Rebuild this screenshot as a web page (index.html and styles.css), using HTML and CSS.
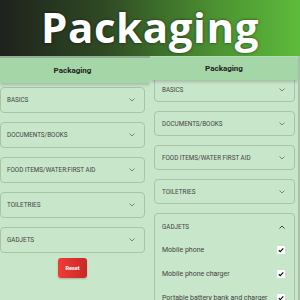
FILE: index.html
```html
<!DOCTYPE html>
<html lang="en">
<head>
  <meta charset="UTF-8">
  <meta name="viewport" content="width=device-width, initial-scale=1.0">
  <title>Packaging</title>
  <link rel="stylesheet" href="styles.css">
</head>
<body>
  <div class="banner">
    <h1 class="banner-title">Packaging</h1>
  </div>

  <div class="shots">
    <div class="phone phone-left">
      <div class="status"></div>
      <div class="appbar">Packaging</div>
      <div class="list">
        <div class="card"><span>BASICS</span><svg class="chev" viewBox="0 0 6 4"><polyline points="0.5,0.5 3,3 5.5,0.5"/></svg></div>
        <div class="card"><span>DOCUMENTS/BOOKS</span><svg class="chev" viewBox="0 0 6 4"><polyline points="0.5,0.5 3,3 5.5,0.5"/></svg></div>
        <div class="card"><span>FOOD ITEMS/WATER:FIRST AID</span><svg class="chev" viewBox="0 0 6 4"><polyline points="0.5,0.5 3,3 5.5,0.5"/></svg></div>
        <div class="card"><span>TOILETRIES</span><svg class="chev" viewBox="0 0 6 4"><polyline points="0.5,0.5 3,3 5.5,0.5"/></svg></div>
        <div class="card"><span>GADJETS</span><svg class="chev" viewBox="0 0 6 4"><polyline points="0.5,0.5 3,3 5.5,0.5"/></svg></div>
      </div>
      <div class="btn-container">
        <button class="reset">Reset</button>
      </div>
    </div>

    <div class="phone phone-right">
      <div class="appbar">Packaging</div>
      <div class="list scrolled">
        <div class="card"><span>BASICS</span><svg class="chev" viewBox="0 0 6 4"><polyline points="0.5,0.5 3,3 5.5,0.5"/></svg></div>
        <div class="card"><span>DOCUMENTS/BOOKS</span><svg class="chev" viewBox="0 0 6 4"><polyline points="0.5,0.5 3,3 5.5,0.5"/></svg></div>
        <div class="card"><span>FOOD ITEMS/WATER FIRST AID</span><svg class="chev" viewBox="0 0 6 4"><polyline points="0.5,0.5 3,3 5.5,0.5"/></svg></div>
        <div class="card"><span>TOILETRIES</span><svg class="chev" viewBox="0 0 6 4"><polyline points="0.5,0.5 3,3 5.5,0.5"/></svg></div>
        <div class="card open">
          <div class="card-head"><span>GADJETS</span><svg class="chev up" viewBox="0 0 6 4"><polyline points="0.5,3.5 3,1 5.5,3.5"/></svg></div>
          <div class="entry"><span>Mobile phone</span><span class="check"><svg viewBox="0 0 8 8"><polyline points="1.8,4.2 3.3,5.6 6.3,2.4"/></svg></span></div>
          <div class="entry"><span>Mobile phone charger</span><span class="check"><svg viewBox="0 0 8 8"><polyline points="1.8,4.2 3.3,5.6 6.3,2.4"/></svg></span></div>
          <div class="entry"><span>Portable battery bank and charger</span><span class="check"><svg viewBox="0 0 8 8"><polyline points="1.8,4.2 3.3,5.6 6.3,2.4"/></svg></span></div>
        </div>
      </div>
    </div>
  </div>
</body>
</html>
```

FILE: styles.css
```css
body {
  margin: 0;
  width: 300px;
  height: 300px;
  overflow: hidden;
  background: #c8e6c9;
  font-family: Roboto, "Liberation Sans", sans-serif;
}
.banner {
  height: 56px;
  background: linear-gradient(90deg, #1e221c 0%, #2f4a24 35%, #4c9232 72%, #5dbb3b 100%);
}
.banner-title {
  margin: 0;
  text-align: center;
  font-family: "Open Sans", sans-serif;
  font-weight: 700;
  font-size: 42px;
  line-height: 54px;
  letter-spacing: 0.6px;
  color: #fff;
  text-shadow: 0 0 3px rgba(0,0,0,0.6);
}
.shots {
  display: flex;
}
.phone {
  width: 150px;
  height: 244px;
  display: flex;
  flex-direction: column;
  overflow: hidden;
}
.phone > * {
  flex-shrink: 0;
}
.status {
  height: 2px;
  background: #93b093;
}
.appbar {
  position: relative;
  z-index: 1;
  height: 25px;
  display: flex;
  align-items: center;
  justify-content: center;
  background: #a5d6a7;
  box-shadow: 0 2px 3px rgba(0,0,0,0.18);
  font-size: 8px;
  font-weight: 700;
  color: #222;
}
.phone-left .appbar {
  width: 150px;
  padding-right: 5px;
  box-sizing: border-box;
}
.phone-right .appbar {
  height: 24px;
  border-top: 1px solid #b6dab7;
  box-sizing: border-box;
}
.list {
  display: flex;
  flex-direction: column;
  gap: 9px;
  padding: 4px 5px 0 0;
}
.list > * {
  flex-shrink: 0;
}
.list.scrolled {
  margin-top: -3px;
  padding: 0 3px 0 4px;
}
.card {
  height: 26px;
  box-sizing: border-box;
  border: 1px solid #a9c3aa;
  border-radius: 4px;
  display: flex;
  align-items: center;
  justify-content: space-between;
  padding: 0 9px 0 6px;
  font-size: 6.3px;
  color: #444;
}
.scrolled .card {
  height: 25px;
  padding: 0 9px 0 7px;
}
.chev {
  width: 6px;
  height: 4px;
  fill: none;
  stroke: #777;
  stroke-width: 0.9;
}
.chev.up {
  stroke: #333;
}
.scrolled .card.open {
  height: auto;
  display: block;
  padding: 0;
}
.card-head {
  height: 24px;
  display: flex;
  align-items: center;
  justify-content: space-between;
  padding: 2px 9px 0 7px;
  box-sizing: border-box;
}
.entry {
  height: 24px;
  display: flex;
  align-items: center;
  justify-content: space-between;
  padding: 0 9px 0 7px;
  font-size: 7px;
  color: #444;
}
.check {
  width: 8px;
  height: 8px;
  background: #fff;
  border-radius: 1px;
  display: flex;
}
.check svg {
  width: 8px;
  height: 8px;
  fill: none;
  stroke: #111;
  stroke-width: 1.2;
}
.btn-container {
  display: flex;
  justify-content: center;
  padding-right: 5px;
  margin-top: 5px;
}
.reset {
  width: 29px;
  height: 20px;
  border: none;
  border-radius: 3px;
  background: linear-gradient(90deg, #f03c35, #c9282a);
  color: #fff;
  font-family: Roboto, sans-serif;
  font-size: 5.5px;
  font-weight: 700;
  padding: 0;
  box-shadow: 0 1px 2px rgba(0,0,0,0.2);
}
.phone-right {
  border-right: 2px solid #a8bfa8;
  box-sizing: border-box;
}
```
